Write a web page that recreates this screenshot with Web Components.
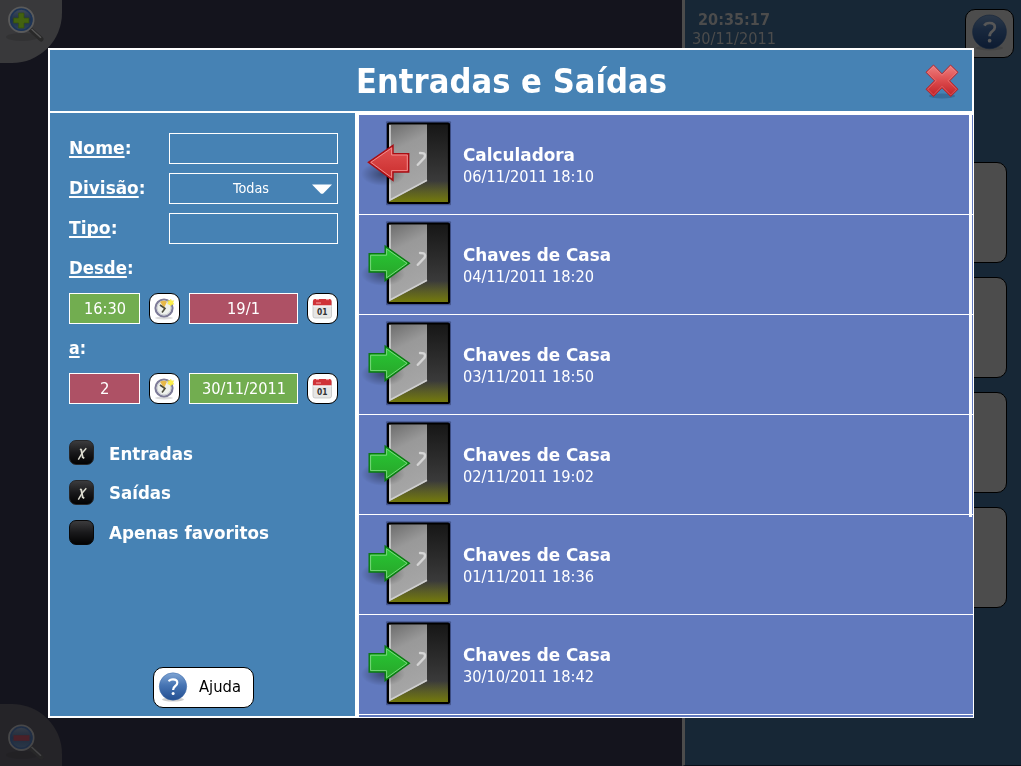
<!DOCTYPE html>
<html lang="pt">
<head>
<meta charset="utf-8">
<title>Entradas e Saídas</title>
<style>
html,body{margin:0;height:100%;overflow:hidden;background:#14141d}
body{font-family:"DejaVu Sans Condensed","DejaVu Sans",sans-serif}
</style>
</head>
<body>
<home-app></home-app>
<script>
const define = (name, html, init) => {
  const t = document.createElement('template');
  t.innerHTML = html;
  customElements.define(name, class extends HTMLElement {
    connectedCallback() {
      if (this.shadowRoot) return;
      this.attachShadow({mode: 'open'}).append(t.content.cloneNode(true));
      if (init) init(this, this.shadowRoot);
    }
  });
};

/* one line of text, stretched to a given width */
define('fit-text', `<style>
:host{display:inline-block;white-space:nowrap;line-height:20px;height:20px;flex:none;text-align:left}
span{display:inline-block;transform-origin:0 0}
</style><span><slot></slot></span>`, (el, r) => {
  const s = r.querySelector('span'), w = +el.getAttribute('w');
  el.style.fontSize = el.getAttribute('size') + 'px';
  el.style.width = w + 'px';
  s.style.transform = 'scaleX(' + w / s.getBoundingClientRect().width + ')';
});

define('help-icon', `<style>:host{display:block;width:30px;height:30px;flex:none}svg{display:block;width:100%;height:100%}:host([dim]) svg{filter:brightness(.34)}</style>
<svg viewBox="0 0 30 30"><defs><linearGradient id="g" x2="0" y2="1"><stop offset="0" stop-color="#7fa5d4"/><stop offset=".45" stop-color="#4775b4"/><stop offset="1" stop-color="#244f91"/></linearGradient></defs>
<ellipse cx="15" cy="27.5" rx="11" ry="2" fill="#bbb" opacity=".7"/><circle cx="15" cy="14.5" r="13.7" fill="url(#g)" stroke="#3e6aa8" stroke-width=".5"/>
<path d="M10.8 9.4Q11.8 7.3 15 7.3Q19.3 7.3 19.3 10.7Q19.3 12.5 17.3 14Q15.1 15.6 15.1 18" fill="none" stroke="#fff" stroke-width="2.2"/><circle cx="15.1" cy="21.6" r="1.5" fill="#fff"/></svg>`);

define('zoom-icon', `<style>:host{display:block;width:44px;height:44px}:host([out]) .in,:host(:not([out])) .out{display:none}svg{display:block}:host([out]) svg{opacity:.65}</style>
<svg width="44" height="44" viewBox="0 0 44 44"><defs><linearGradient id="g" x2="0" y2="1"><stop offset="0" stop-color="#46505c"/><stop offset=".5" stop-color="#1f304a"/><stop offset="1" stop-color="#30465c"/></linearGradient></defs>
<ellipse cx="22" cy="37" rx="16" ry="4" opacity=".12"/>
<path d="M30.5 29.5L41 39" stroke="#292929" stroke-width="5" stroke-linecap="round"/><path d="M31.5 29L41 37.7" stroke="#565656" stroke-width="1.5"/>
<circle cx="21.3" cy="19.7" r="12.2" fill="url(#g)" stroke="#5a5a5a" stroke-width="2"/><circle cx="21.3" cy="19.7" r="10.6" fill="none" stroke="#1c3457" stroke-width="1.5"/>
<path class="in" d="M18.6 13h5.4v5h5v5h-5v5h-5.4v-5h-5v-5h5z" fill="#43620f" stroke="#354f10" stroke-width=".7"/>
<path class="out" d="M13.5 17.2h16v5.6h-16z" fill="#5e1f28"/></svg>`);

define('home-background', `<style>
:host{display:grid;grid-template-columns:682px 1fr;width:1021px;height:766px;position:relative;overflow:hidden}
.map{display:flex;flex-direction:column;justify-content:space-between;align-items:flex-start;background:#14141d}
.c{width:62px;height:62.5px;background:#39393b;border-radius:0 0 50px 0}
.c.b{border-radius:0 50px 0 0;background:#252428}
.b zoom-icon{padding-top:14px}
aside{background:#172736;border-left:3px solid #4c4c4c;border-bottom:1px solid #090e19;display:flex;flex-direction:column;align-items:flex-end;box-sizing:border-box}
.top{display:flex;justify-content:space-between;width:100%;height:162px;box-sizing:border-box;padding:10px 7px 0 7px}
.clock{display:flex;flex-direction:column;align-items:center;color:#4c4c4c;width:84px}
.clock b{font-weight:700;display:flex}.clock fit-text{height:19px}
.help{margin-top:-1px;width:47px;height:47px;border:1px solid #000;border-radius:10px;background:#4c4c4c;display:flex;justify-content:center;align-items:center}
.help help-icon{width:37px;height:37px;margin-top:-2px}
.tile{width:150px;height:99px;margin:0 14px 14px 0;background:#4c4c4c;border:1px solid #000;border-radius:10px;flex:none}
</style>
<div class="map"><div class="c"><zoom-icon></zoom-icon></div><div class="c b"><zoom-icon out></zoom-icon></div></div>
<aside><div class="top"><div class="clock"><b><fit-text w="72" size="16.5">20:35:17</fit-text></b><fit-text w="84" size="16.5">30/11/2011</fit-text></div><div class="help"><help-icon dim></help-icon></div></div>
<div class="tile"></div><div class="tile"></div><div class="tile"></div><div class="tile"></div></aside>`);

define('text-field', `<style>
:host{display:flex;box-sizing:border-box;height:31px;border:1px solid #fff;align-items:center;justify-content:center;color:#fff;position:relative}
:host([ok]){background:#72ad50}:host([bad]){background:#ae5165}
</style><slot></slot>`);

define('drop-field', `<style>
:host{display:block}text-field{padding:0 5px 2px 0}
svg{position:absolute;right:5px;top:10px}
</style><text-field><slot></slot><svg width="20" height="11"><path d="M0 .5H20L11.5 9.2Q10 10.5 8.5 9.2Z" fill="#fff"/></svg></text-field>`);

define('pick-button', `<style>
:host{display:block;box-sizing:border-box;width:31px;height:31px;border:1px solid #000;border-radius:9px;background:#fff}
svg{display:block}:host([kind=clock]) .cal,:host([kind=date]) .clk{display:none}
text{font:bold 9.5px "DejaVu Sans",sans-serif}
</style>
<svg class="clk" width="29" height="29" viewBox="0 0 29 29"><ellipse cx="14" cy="24" rx="9" ry="1.5" fill="#ddd"/><circle cx="14" cy="14" r="8.5" fill="#eef1ec" stroke="#7d7b98" stroke-width="2.2"/><circle cx="14" cy="14" r="7" fill="none" stroke="#c9cbd0"/>
<path d="M14 14L10 7.8Q14 5.5 17 7.8Z" fill="#e7b94b"/><path d="M10 11L15 14.5L12 18.5" fill="none" stroke="#4b4b3d" stroke-width="1.6"/><path d="M20.8 5l.9 1.9 2.1-.3-.8 1.9 1 1.7-2.1.2-1.2 1.6-1.2-1.6-2-.4 1-1.6-.8-1.8 2.1.3z" fill="#fdf04a" stroke="#f3e548" stroke-width=".4"/></svg>
<svg class="cal" width="29" height="29" viewBox="0 0 29 29"><rect x="5" y="6" width="18.5" height="18" rx="2" fill="#e6e6e6" stroke="#bbb" stroke-width=".7"/><path d="M5 11.5V7Q5 5 7 5H21.5Q23.5 5 23.5 7V11.5Z" fill="#cf3338"/><path d="M8 5.6h3M18 5.6h3M8 9h5" stroke="#f5a5a5"/><path d="M5 12h18.5" stroke="#f8f8f8"/><text x="14.2" y="20.5" text-anchor="middle" textLength="10.5" lengthAdjust="spacingAndGlyphs" fill="#333">01</text></svg>`);

define('check-row', `<style>
:host{display:flex;height:25px;gap:15px;align-items:center;color:#fff;font-weight:700}
i{display:block;width:25px;height:25px;box-sizing:border-box;border:1px solid #080808;border-radius:7px;background:linear-gradient(#3b3b3d,#19191b 50%,#020202)}
svg{display:none}:host([checked]) svg{display:block}:host([checked]) i{border-color:#252628}
</style><i><svg width="23" height="23" viewBox="0 0 23 23"><path d="M10.2 7.8L11.3 9L12.7 16.2L14.2 17.4" fill="none" stroke="#dddcd0" stroke-width="1.8"/><path d="M16.3 7.2L12.2 12L8.3 18.6" fill="none" stroke="#dddcd0" stroke-width="1.4"/></svg></i><slot></slot>`);

define('filter-panel', `<style>
:host{display:flex;flex-direction:column;background:#4682b4;padding:20px 17px 8px 19px;box-sizing:border-box;color:#fff}
.f{display:grid;grid-template-columns:71px 31px 109px 31px;column-gap:9px;row-gap:9px;grid-auto-rows:31px;align-items:center}
.l{font-weight:700;grid-column:1/3;width:100px;padding-bottom:2px}.full{grid-column:1/5}
u{text-decoration-thickness:2px;text-underline-offset:2px;text-decoration-skip-ink:none}
.r{display:grid;grid-template-columns:100px 169px;grid-column:1/5;align-items:center}
.r .l{grid-column:auto}
.checks{display:grid;gap:15px;margin-top:36px}
.checks fit-text[w="84"]{margin-top:2px}
button{margin:auto auto 0 84px;width:101px;height:41px;box-sizing:border-box;border:1px solid #000;border-radius:10px;background:#fff;display:flex;align-items:center;padding:0 0 0 4px;gap:11px;color:#000;font-family:inherit}
button help-icon{margin-top:-1px}button fit-text{margin-top:-1px}
</style>
<div class="f">
<div class="r"><div class="l"><fit-text w="62.5" size="18"><u>Nome</u>:</fit-text></div><text-field></text-field></div>
<div class="r"><div class="l"><fit-text w="76.5" size="18"><u>Divisão</u>:</fit-text></div><drop-field><fit-text w="36" size="14">Todas</fit-text></drop-field></div>
<div class="r"><div class="l"><fit-text w="48.5" size="18"><u>Tipo</u>:</fit-text></div><text-field></text-field></div>
<div class="l full"><fit-text w="64.5" size="18"><u>Desde</u>:</fit-text></div>
<text-field ok><fit-text w="42" size="16.5">16:30</fit-text></text-field><pick-button kind="clock"></pick-button><text-field bad><fit-text w="33" size="16.5">19/1</fit-text></text-field><pick-button kind="date"></pick-button>
<div class="l full"><fit-text w="17" size="18"><u>a</u>:</fit-text></div>
<text-field bad><fit-text w="9.5" size="16.5">2</fit-text></text-field><pick-button kind="clock"></pick-button><text-field ok><fit-text w="84" size="16.5">30/11/2011</fit-text></text-field><pick-button kind="date"></pick-button>
</div>
<div class="checks"><check-row checked><fit-text w="84" size="18">Entradas</fit-text></check-row><check-row checked><fit-text w="62" size="18">Saídas</fit-text></check-row><check-row><fit-text w="160" size="18">Apenas favoritos</fit-text></check-row></div>
<button><help-icon></help-icon><fit-text w="42" size="16.5">Ajuda</fit-text></button>`);

define('door-icon', `<style>:host{display:block;width:104px;height:99px;flex:none}svg{display:block}:host([out]) .in,:host(:not([out])) .out{display:none}</style>
<svg width="104" height="99" viewBox="0 0 104 99"><defs>
<linearGradient id="d" x2="0" y2="1"><stop offset="0" stop-color="#161616"/><stop offset="1" stop-color="#484848"/></linearGradient>
<linearGradient id="f" x2="0" y2="1"><stop offset="0" stop-color="#73790b" stop-opacity="0"/><stop offset="1" stop-color="#73790b"/></linearGradient>
<linearGradient id="p" x2=".25" y2="1"><stop offset="0" stop-color="#6b6b6b"/><stop offset=".35" stop-color="#999"/><stop offset="1" stop-color="#a8a8a8"/></linearGradient>
<linearGradient id="r" x2="0" y2="1"><stop offset="0" stop-color="#e25252"/><stop offset="1" stop-color="#c82b2b"/></linearGradient>
<linearGradient id="s" x2="0" y2="1"><stop offset="0" stop-color="#27c934"/><stop offset="1" stop-color="#28a229"/></linearGradient>
<radialGradient id="h"><stop offset="0" stop-opacity=".4"/><stop offset="1" stop-opacity="0"/></radialGradient></defs>
<rect x="27" y="6.3" width="65" height="84" rx="1" fill="#2c3968" opacity=".55"/>
<rect x="29" y="8.5" width="61" height="79.5" rx="1" fill="url(#d)" stroke="#000" stroke-width="2.2"/>
<rect x="30" y="66" width="59" height="21" fill="url(#f)"/>
<path d="M30 9.5H68V66L30 86.5Z" fill="url(#p)"/><path d="M31 10V85L68 65.3" fill="none" stroke="#d0d0d0" stroke-width="1.6"/>
<path d="M61 38L64.6 38.3Q66.8 39.5 65.6 42.5L58.8 49.8" fill="none" stroke="#d4d4d4" stroke-width="2.4" stroke-linecap="round"/>
<ellipse cx="24" cy="59" rx="22" ry="12" fill="url(#h)"/>
<g class="out"><path d="M9.4 47.3L34 30.4V38.7H49.7V57H34V65.3Z" fill="url(#r)" stroke="#a80d13" stroke-width="1.4"/><path d="M11.8 47.3L32.6 33V40H48.3V55.6H32.6V62.6Z" fill="none" stroke="#f18a8a" stroke-width="1"/></g>
<g class="in"><path d="M10.2 38.8H26.2V31.2L50.3 48.3L26.2 65.6V57H10.2Z" fill="url(#s)" stroke="#087b10" stroke-width="1.4"/><path d="M11.6 40.2H27.6V33.9L48 48.3L27.6 62.9V55.6H11.6Z" fill="none" stroke="#79d77c" stroke-width="1"/></g>
</svg>`);

define('log-item', `<style>
:host{display:flex;height:99px;border-bottom:1px solid #fff;color:#fff}
div{display:flex;flex-direction:column;padding-top:30px}
.n{font-weight:700;height:22px}
</style><door-icon></door-icon><div><span class="n"><slot name="name"></slot></span><slot></slot></div>`, (el, r) => {
  if (el.hasAttribute('out')) r.querySelector('door-icon').setAttribute('out', '');
});

define('log-list', `<style>
:host{display:block;box-sizing:border-box;border:solid #fff;border-width:2px 1px 1px 4px;background:#6179be;position:relative;overflow:hidden}
.bar{position:absolute;right:1px;top:0;width:3px;height:402px;background:#fff}
</style><slot></slot><div class="bar"></div>`);

define('modal-dialog', `<style>
:host{position:absolute;left:48px;top:48px;width:926px;height:670px;display:grid;grid-template-columns:307px 619px;grid-template-rows:65px 605px;background:#fff}
header{grid-column:1/3;margin:2px 2px 2px;height:61px;background:#4682b4;display:grid;grid-template-columns:1fr auto 1fr;align-items:center;color:#fff;font-weight:700}
header fit-text{grid-column:2;height:40px;line-height:40px;margin-top:3px}
header svg{justify-self:end;margin-right:12px}
filter-panel{margin:0 0 2px 2px}
</style>
<header><fit-text w="311" size="33">Entradas e Saídas</fit-text><svg width="36" height="38" viewBox="0 0 36 38"><defs><linearGradient id="x" x2="0" y2="1"><stop offset="0" stop-color="#ee8080"/><stop offset=".5" stop-color="#dc4b4d"/><stop offset="1" stop-color="#bf2026"/></linearGradient></defs><ellipse cx="18" cy="34" rx="13" ry="2.4" fill="#204e75" opacity=".4"/><path d="M9.5 3L18 11.8L26.5 3L34 10.3L25.7 18.8L34 27.3L26.7 34.5L18 25.8L9.5 34.5L2 27.3L10.5 18.8L2 10.3Z" fill="url(#x)" stroke="#b0262e" stroke-width="1"/><path d="M9.5 4.6L18 13.3L26.5 4.6L32.5 10.3L24 18.8L32.5 27.3L26.7 33L18 24.3L9.5 33L3.6 27.3L12 18.8L3.6 10.3Z" fill="none" stroke="#f0a0a0" stroke-opacity=".4" stroke-width=".9"/></svg></header>
<filter-panel></filter-panel>
<log-list>
<log-item out><fit-text slot="name" w="112" size="18">Calculadora</fit-text><fit-text w="131" size="16.5">06/11/2011 18:10</fit-text></log-item>
<log-item><fit-text slot="name" w="148" size="18">Chaves de Casa</fit-text><fit-text w="131" size="16.5">04/11/2011 18:20</fit-text></log-item>
<log-item><fit-text slot="name" w="148" size="18">Chaves de Casa</fit-text><fit-text w="131" size="16.5">03/11/2011 18:50</fit-text></log-item>
<log-item><fit-text slot="name" w="148" size="18">Chaves de Casa</fit-text><fit-text w="131" size="16.5">02/11/2011 19:02</fit-text></log-item>
<log-item><fit-text slot="name" w="148" size="18">Chaves de Casa</fit-text><fit-text w="131" size="16.5">01/11/2011 18:36</fit-text></log-item>
<log-item><fit-text slot="name" w="148" size="18">Chaves de Casa</fit-text><fit-text w="131" size="16.5">30/10/2011 18:42</fit-text></log-item>
</log-list>`);

define('home-app', `<style>:host{display:block;position:relative;width:1021px;height:766px}</style><home-background></home-background><modal-dialog></modal-dialog>`);
</script>
</body>
</html>
